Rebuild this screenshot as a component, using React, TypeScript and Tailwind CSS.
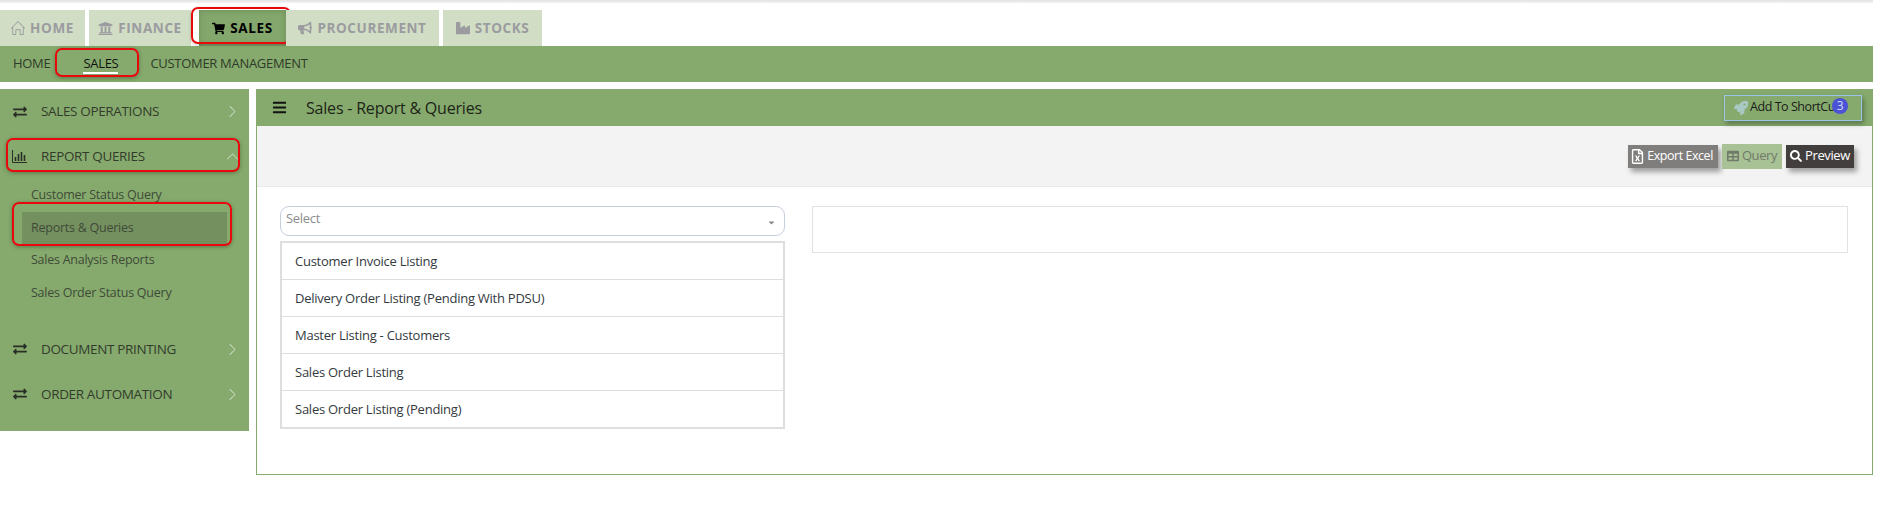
import { ReactNode } from 'react'
import { FaBars, FaBullhorn, FaCaretDown, FaExchangeAlt, FaIndustry, FaRegFileExcel, FaRocket, FaSearch, FaShoppingCart, FaTable, FaUniversity } from 'react-icons/fa'
import { SlArrowRight, SlArrowUp, SlHome } from 'react-icons/sl'

const TABS = [
  { label: 'HOME', icon: <SlHome size={14} />, width: 'w-[85px]' },
  { label: 'FINANCE', icon: <FaUniversity size={15} />, width: 'w-[102px]' },
  { label: 'SALES', icon: <FaShoppingCart size={13} />, width: 'w-[87px]', active: true },
  { label: 'PROCUREMENT', icon: <FaBullhorn size={14} />, width: 'w-[153px]' },
  { label: 'STOCKS', icon: <FaIndustry size={14} />, width: 'w-[99px]' },
]

const SUB_ITEMS = ['Customer Status Query', 'Reports & Queries', 'Sales Analysis Reports', 'Sales Order Status Query']

const LISTINGS = [
  'Customer Invoice Listing',
  'Delivery Order Listing (Pending With PDSU)',
  'Master Listing - Customers',
  'Sales Order Listing',
  'Sales Order Listing (Pending)',
]

function RedBox({ className }: { className: string }) {
  return <div className={`pointer-events-none absolute rounded-[7px] border-2 border-[#e8090c] ${className}`} />
}

function ChartIcon() {
  return (
    <svg width="15" height="13" viewBox="0 0 15 13" fill="none" stroke="currentColor">
      <path d="M0.5 0v12.5H15" />
      <path d="M3.5 7v4M6.5 4v7M9.5 2v9M12.5 5v6" strokeWidth="1.6" />
    </svg>
  )
}

function SideItem({ icon, label, open, className = '', children }: { icon: ReactNode; label: string; open?: boolean; className?: string; children?: ReactNode }) {
  return (
    <div className={`relative flex h-[27px] items-center text-[13.5px] text-[#333c2c] ${className}`}>
      <span className="flex w-[41px] shrink-0 justify-center pl-[1px] pr-[3px] text-[#2a2f26]">{icon}</span>
      <span className="flex-1 tracking-[-0.35px]">{label}</span>
      <span className="mr-[11px] text-[#d3e0c8]">{open ? <SlArrowUp size={11} /> : <SlArrowRight size={11} />}</span>
      {children}
    </div>
  )
}

export default function App() {
  return (
    <div className="h-[525px] w-[1886px] overflow-hidden bg-white pr-[13px] font-['Open_Sans',sans-serif]">
      <div className="h-[10px]">
        <div className="h-[3px] bg-gradient-to-b from-[#e2e2e2] to-[#f4f4f4]" />
      </div>

      <nav className="flex h-[36px]">
        {TABS.map((tab) => (
          <div
            key={tab.label}
            className={`relative mr-[4px] flex shrink-0 items-center justify-center gap-[5px] text-[13.5px] font-bold tracking-[0.6px] ${tab.width} ${
              tab.active ? '!mr-0 bg-[#83a76c] text-black' : 'bg-[#d1ddc4] text-[#9b9ba0]'
            } ${tab.label === 'FINANCE' ? '!mr-[8px]' : ''} ${tab.label === 'SALES' ? 'shadow-[inset_0_0_6px_#6d8b58]' : ''}`}
          >
            {tab.icon}
            {tab.label}
            {tab.active && <RedBox className="-top-[3px] -left-[8px] -right-[5px] bottom-[2px] shadow-[0_1px_3px_rgba(0,0,0,0.25)]" />}
          </div>
        ))}
      </nav>

      <div className="flex h-[36px] items-center bg-[#86aa6d] text-[13px] tracking-[-0.3px] text-[#2f3a29]">
        <span className="ml-[13px]">HOME</span>
        <span className="relative ml-[33px] border-b-2 border-white leading-[18px] text-[#111]">
          SALES
          <RedBox className="-top-[6px] -left-[28px] -right-[21px] -bottom-[5px] shadow-[0_1px_4px_rgba(0,0,0,0.3)]" />
        </span>
        <span className="ml-[32px]">CUSTOMER MANAGEMENT</span>
      </div>

      <div className="mt-[7px] flex items-start">
        <aside className="h-[342px] w-[249px] shrink-0 bg-[#86aa6d] pt-[9px]">
          <SideItem icon={<FaExchangeAlt size={14} />} label="SALES OPERATIONS" />
          <SideItem icon={<ChartIcon />} label="REPORT QUERIES" open className="mt-[18px]">
            <RedBox className="-top-[5px] left-[6px] right-[9px] -bottom-[2px] shadow-[0_1px_4px_rgba(0,0,0,0.3)]" />
          </SideItem>
          <ul className="mt-[9px] text-[12.5px] tracking-[-0.25px] text-[#3f4a38]">
            {SUB_ITEMS.map((item) => (
              <li
                key={item}
                className={`relative ml-[22px] mr-[22px] flex h-[32.7px] items-center pl-[9px] ${item === 'Reports & Queries' ? 'bg-[#75905f]' : ''}`}
              >
                {item}
                {item === 'Reports & Queries' && <RedBox className="-top-[10px] -left-[10px] -right-[5px] -bottom-[2px] shadow-[0_1px_4px_rgba(0,0,0,0.3)]" />}
              </li>
            ))}
          </ul>
          <SideItem icon={<FaExchangeAlt size={14} />} label="DOCUMENT PRINTING" className="mt-[26px]" />
          <SideItem icon={<FaExchangeAlt size={14} />} label="ORDER AUTOMATION" className="mt-[18px]" />
        </aside>

        <main className="ml-[7px] h-[386px] flex-1 border border-t-0 border-[#86aa6d]">
          <header className="flex h-[37px] items-center bg-[#86aa6d] pl-[15px] pr-[10px]">
            <FaBars size={15} className="text-[#111]" />
            <h1 className="ml-[19px] flex-1 text-[16px] font-normal tracking-[-0.2px] text-[#1c2418]">Sales - Report &amp; Queries</h1>
            <button className="relative flex h-[26px] w-[138px] items-center border border-[#9ac5e8] pl-[9px] text-[12.5px] tracking-[-0.45px] text-[#1a1a1a] shadow-[2px_3px_5px_rgba(0,0,0,0.3)]">
              <FaRocket size={14} className="mr-[2px] text-[#a9c9c4]" />
              Add To ShortCut
              <span className="absolute left-[107px] top-[2px] flex h-[16px] w-[16px] items-center justify-center rounded-full bg-[#4a53d6] text-[12px] text-[#d5d8ff]">3</span>
            </button>
          </header>

          <div className="flex h-[61px] items-center justify-end gap-[4px] border-b border-[#e9e9e9] bg-[#f3f3f3] pr-[18px]">
            <button className="flex h-[23px] w-[90px] items-center justify-center gap-[2px] bg-[#807e7d] pr-[3px] text-[12.5px] tracking-[-0.45px] text-white shadow-[3px_4px_5px_rgba(0,0,0,0.35)]">
              <FaRegFileExcel size={15} />
              Export Excel
            </button>
            <button className="flex h-[25px] w-[60px] items-center justify-center gap-[3px] bg-[#a8c295] text-[13px] tracking-[-0.4px] text-[#707a6a]">
              <FaTable size={12} />
              Query
            </button>
            <button className="flex h-[23px] w-[68px] items-center justify-center gap-[3px] bg-[#433e3e] text-[13px] tracking-[-0.4px] text-white shadow-[3px_4px_5px_rgba(0,0,0,0.35)]">
              <FaSearch size={12} />
              Preview
            </button>
          </div>

          <div className="flex items-start pl-[23px] pr-[24px] pt-[19px]">
            <div className="w-[505px] shrink-0">
              <div className="flex h-[30px] items-start justify-between rounded-[9px] border border-[#c5cfdc] pl-[5px] pr-[8px] pt-[2px] text-[13px] tracking-[-0.3px] text-[#8d8d8d]">
                Select
                <FaCaretDown size={9} className="mt-[9px] text-[#888]" />
              </div>
              <ul className="mt-[5px] border-2 border-[#dedede] text-[13px] tracking-[-0.25px] text-[#333a3e]">
                {LISTINGS.map((row, i) => (
                  <li key={row} className={`flex items-center pl-[13px] pt-[1px] ${i ? 'h-[37px] border-t border-[#dedede]' : 'h-[36px]'}`}>
                    {row}
                  </li>
                ))}
              </ul>
            </div>
            <div className="ml-[27px] h-[47px] flex-1 border border-[#e2e2e2]" />
          </div>
        </main>
      </div>
    </div>
  )
}
